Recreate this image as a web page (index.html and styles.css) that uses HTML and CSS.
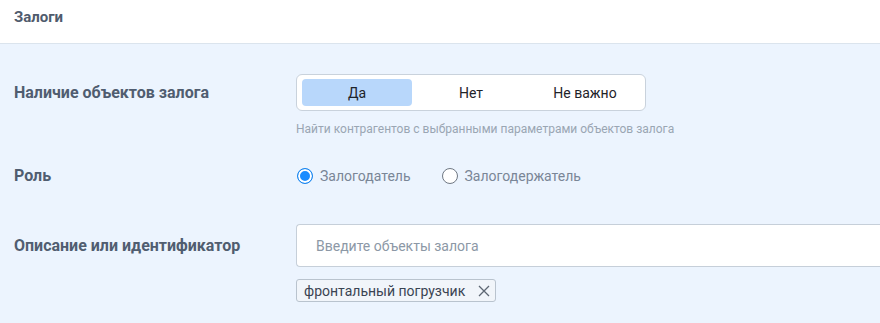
FILE: index.html
```html
<!DOCTYPE html>
<html lang="ru">
<head>
    <meta charset="UTF-8">
    <meta name="viewport" content="width=device-width, initial-scale=1.0">
    <title>Залоги</title>
    <link rel="stylesheet" href="styles.css">
</head>
<body>
<div class="panel">
    <div class="panel-header">Залоги</div>

    <div class="panel-body">
        <!-- Наличие объектов залога -->
        <div class="row">
            <div class="label label-seg">Наличие объектов залога</div>
            <div class="control">
                <div class="segmented">
                    <button class="seg-btn active">Да</button>
                    <button class="seg-btn">Нет</button>
                    <button class="seg-btn">Не важно</button>
                </div>
                <div class="hint">Найти контрагентов с выбранными параметрами объектов залога</div>
            </div>
        </div>

        <!-- Роль -->
        <div class="row row-role">
            <div class="label label-radio">Роль</div>
            <div class="control radios">
                <label class="radio">
                    <span class="radio-mark checked"></span>
                    Залогодатель
                </label>
                <label class="radio">
                    <span class="radio-mark"></span>
                    Залогодержатель
                </label>
            </div>
        </div>

        <!-- Описание -->
        <div class="row row-desc">
            <div class="label label-input">Описание или идентификатор</div>
            <div class="control">
                <input class="text-input" type="text" placeholder="Введите объекты залога">
                <div class="tags">
                    <span class="tag">фронтальный погрузчик
                        <svg class="tag-close" width="12" height="12" viewBox="0 0 12 12">
                            <path d="M1 1 L11 11 M11 1 L1 11" stroke="#5d6773" stroke-width="1.3" fill="none"/>
                        </svg>
                    </span>
                </div>
            </div>
        </div>
    </div>
</div>
</body>
</html>
```

FILE: styles.css
```css
body {
    margin: 0;
    font-family: Roboto, "Liberation Sans", sans-serif;
    background: #ecf4fe;
    overflow: hidden;
}
.panel-header {
    height: 43px;
    line-height: 35px;
    padding-left: 14px;
    background: #fff;
    border-bottom: 1px solid #dbe4ed;
    font-size: 15px;
    font-weight: bold;
    color: #4f5b6d;
}
.panel-body {
    padding: 30px 0 0 14px;
}
.row {
    display: flex;
    align-items: flex-start;
}
.row-role {
    margin-top: 29px;
}
.row-desc {
    margin-top: 38px;
}
.label {
    width: 282px;
    flex-shrink: 0;
    font-size: 16px;
    font-weight: bold;
    color: #505d70;
}
.label-seg {
    line-height: 37px;
}
.label-radio {
    line-height: 20px;
}
.label-input {
    line-height: 43px;
}
.control {
    flex: 1;
}
.segmented {
    display: flex;
    gap: 4px;
    width: 338px;
    padding: 4px 5px;
    background: #fff;
    border: 1px solid #c9d2dc;
    border-radius: 6px;
}
.seg-btn {
    width: 110px;
    height: 27px;
    border: none;
    border-radius: 4px;
    background: transparent;
    font-family: inherit;
    font-size: 14px;
    color: #1e2329;
    cursor: pointer;
}
.seg-btn.active {
    background: #b8d7fb;
}
.hint {
    margin-top: 10px;
    font-size: 12px;
    line-height: 16px;
    color: #9aa6b3;
}
.radios {
    display: flex;
    gap: 30px;
}
.radio {
    display: flex;
    align-items: center;
    gap: 7px;
    height: 20px;
    font-size: 14px;
    color: #7a8697;
    margin-left: 1px;
}
.radio-mark {
    width: 14px;
    height: 14px;
    border: 1px solid #6f7884;
    border-radius: 50%;
    background: #fff;
}
.radio-mark.checked {
    border-color: #1a86ee;
    background: #1a8cff;
    box-shadow: inset 0 0 0 2px #fff;
}
.text-input {
    display: block;
    box-sizing: border-box;
    width: 620px;
    height: 43px;
    padding: 0 19px;
    border: 1px solid #c6cfd9;
    border-right: none;
    border-radius: 4px 0 0 4px;
    background: #fff;
    font-family: inherit;
    font-size: 14px;
    outline: none;
}
.text-input::placeholder {
    color: #8c98a6;
}
.tags {
    margin-top: 12px;
    display: flex;
}
.tag {
    display: flex;
    align-items: center;
    gap: 13px;
    height: 21px;
    padding: 0 5px 0 7px;
    border: 1px solid #b9c3ce;
    border-radius: 3px;
    background: #f1f5fa;
    font-size: 14px;
    color: #3a4453;
}
```
